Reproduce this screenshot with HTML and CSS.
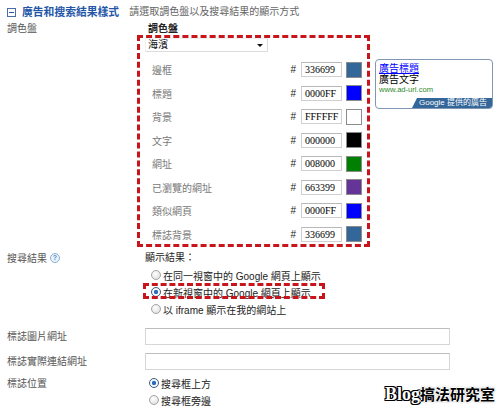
FILE: index.html
```html
<!DOCTYPE html>
<html>
<head>
<meta charset="utf-8">
<link rel="stylesheet" href="styles.css">
</head>
<body>
<div class="page">
  <div class="header">
    <span class="collapse-icon"></span>
    <span class="title">廣告和搜索結果樣式</span>
    <span class="desc">請選取調色盤以及搜尋結果的顯示方式</span>
  </div>

  <div class="row row-palette">
    <div class="label">調色盤</div>
    <div class="content">
      <div class="subtitle">調色盤</div>
      <div class="palette-wrap">
        <div class="palette-box">
          <div class="select"><span>海濱</span><span class="caret"></span></div>
          <div class="color-list">
            <div class="color-row"><span class="cname">邊框</span><span class="hash">#</span><span class="hex">336699</span><span class="swatch" style="background:#336699"></span></div>
            <div class="color-row"><span class="cname">標題</span><span class="hash">#</span><span class="hex">0000FF</span><span class="swatch" style="background:#0000FF"></span></div>
            <div class="color-row"><span class="cname">背景</span><span class="hash">#</span><span class="hex">FFFFFF</span><span class="swatch" style="background:#FFFFFF"></span></div>
            <div class="color-row"><span class="cname">文字</span><span class="hash">#</span><span class="hex">000000</span><span class="swatch" style="background:#000000"></span></div>
            <div class="color-row"><span class="cname">網址</span><span class="hash">#</span><span class="hex">008000</span><span class="swatch" style="background:#008000"></span></div>
            <div class="color-row"><span class="cname">已瀏覽的網址</span><span class="hash">#</span><span class="hex">663399</span><span class="swatch" style="background:#663399"></span></div>
            <div class="color-row"><span class="cname">類似網頁</span><span class="hash">#</span><span class="hex">0000FF</span><span class="swatch" style="background:#0000FF"></span></div>
            <div class="color-row"><span class="cname">標誌背景</span><span class="hash">#</span><span class="hex">336699</span><span class="swatch" style="background:#336699"></span></div>
          </div>
        </div>
        <div class="preview">
          <div class="ad-title">廣告標題</div>
          <div class="ad-text">廣告文字</div>
          <div class="ad-url">www.ad-url.com</div>
          <div class="ad-footer">Google 提供的廣告</div>
        </div>
      </div>
    </div>
  </div>

  <div class="row row-results">
    <div class="label">搜尋結果 <span class="help">?</span></div>
    <div class="content">
      <div class="results-title">顯示結果：</div>
      <div class="option first"><span class="radio"></span><span class="opt-text">在同一視窗中的 Google 網頁上顯示</span></div>
      <div class="option marked"><span class="radio checked"></span><span class="opt-text">在新視窗中的 Google 網頁上顯示</span></div>
      <div class="option"><span class="radio"></span><span class="opt-text">以 iframe 顯示在我的網站上</span></div>
    </div>
  </div>

  <div class="row row-input first-input">
    <div class="label">標誌圖片網址</div>
    <div class="content"><div class="text-input"></div></div>
  </div>
  <div class="row row-input second-input">
    <div class="label">標誌實際連結網址</div>
    <div class="content"><div class="text-input"></div></div>
  </div>

  <div class="row row-position">
    <div class="label">標誌位置</div>
    <div class="content">
      <div class="option low"><span class="radio checked"></span><span class="opt-text">搜尋框上方</span></div>
      <div class="option low"><span class="radio"></span><span class="opt-text">搜尋框旁邊</span></div>
    </div>
  </div>

  <div class="watermark">Blog<span class="wm-cjk">搞法研究室</span></div>
</div>
</body>
</html>
```
FILE: styles.css
```css
html, body {
  margin: 0;
  padding: 0;
  background: #fff;
}
.page {
  position: relative;
  width: 500px;
  height: 412px;
  overflow: hidden;
  font-family: "Liberation Sans", "Noto Sans CJK TC", sans-serif;
  font-size: 10px;
  color: #333;
}
.header {
  display: flex;
  align-items: center;
  height: 14px;
  padding: 5px 0 3px 7px;
  line-height: 14px;
}
.collapse-icon {
  position: relative;
  width: 9px;
  height: 9px;
  box-sizing: border-box;
  border: 1px solid #4a6fa5;
  background: #fff;
}
.collapse-icon::after {
  content: "";
  position: absolute;
  left: 1px;
  right: 1px;
  top: 3px;
  height: 1px;
  background: #2b55a0;
}
.title {
  margin-left: 6px;
  font-size: 10.8px;
  font-weight: bold;
  color: #2456a8;
}
.desc {
  margin-left: 10px;
  color: #666;
}
.row {
  display: flex;
}
.label {
  width: 138px;
  padding-left: 7px;
  flex: none;
  color: #555;
}
.content {
  flex: 1;
}
.row-palette .label,
.subtitle {
  line-height: 13px;
}
.subtitle {
  padding-left: 3px;
  font-weight: bold;
  color: #222;
}
.palette-wrap {
  display: flex;
  align-items: flex-start;
}
.palette-box {
  width: 222px;
  margin-left: -8px;
  padding: 0 0 2px 5px;
  border: 3px dashed #c8151b;
}
.select {
  display: flex;
  align-items: center;
  justify-content: space-between;
  width: 123px;
  height: 14px;
  box-sizing: border-box;
  padding: 0 4px 0 2px;
  border: 1px solid #dcdcdc;
  border-top-color: #f0f0f0;
  border-left-color: #f0f0f0;
  color: #111;
  line-height: 12px;
}
.caret {
  width: 0;
  height: 0;
  border-left: 3px solid transparent;
  border-right: 3px solid transparent;
  border-top: 3px solid #111;
}
.color-list {
  display: flex;
  flex-direction: column;
  gap: 8.57px;
  margin-top: 10px;
}
.color-row {
  display: flex;
  align-items: center;
  height: 15px;
  padding-right: 5px;
}
.cname {
  flex: 1;
  padding-left: 7px;
  color: #777;
}
.hash {
  margin-right: 5px;
  color: #222;
  font-size: 10px;
}
.hex {
  width: 41px;
  height: 15px;
  box-sizing: border-box;
  padding-left: 3px;
  border: 1px solid #d0d0d0;
  border-top-color: #b8b8b8;
  font-family: "Liberation Serif", serif;
  font-size: 10px;
  line-height: 13px;
  color: #000;
  white-space: nowrap;
  overflow: hidden;
}
.swatch {
  width: 16px;
  height: 16px;
  margin-left: 4px;
  box-sizing: border-box;
  border: 1px solid #8c8c8c;
}
.preview {
  position: relative;
  width: 118px;
  height: 50px;
  margin: 24px 0 0 5px;
  box-sizing: border-box;
  padding: 3px 0 0 3px;
  border: 1px solid #8196b2;
  border-radius: 4px;
  overflow: hidden;
  background: #fff;
}
.ad-title {
  color: #0000ff;
  text-decoration: underline;
  line-height: 11px;
}
.ad-text {
  color: #000;
  line-height: 11px;
}
.ad-url {
  color: #2e8b2e;
  font-size: 7.6px;
  line-height: 9px;
}
.ad-footer {
  position: absolute;
  right: 0;
  bottom: 0;
  width: 80px;
  height: 10px;
  padding-left: 7px;
  box-sizing: border-box;
  background: #336699;
  clip-path: polygon(5px 0, 100% 0, 100% 100%, 0 100%);
  color: #fff;
  font-size: 8px;
  line-height: 10px;
  white-space: nowrap;
}
.row-results {
  margin-top: 3px;
}
.row-results .label {
  display: flex;
  align-items: center;
  height: 16px;
}
.help {
  display: inline-flex;
  align-items: center;
  justify-content: center;
  width: 10px;
  height: 10px;
  margin-left: 3px;
  box-sizing: border-box;
  border: 1px solid #8ab0d4;
  border-radius: 50%;
  background: #eaf3fb;
  color: #5b8fc4;
  font-size: 7px;
  font-weight: bold;
  line-height: 8px;
}
.results-title {
  height: 16px;
  line-height: 16px;
  color: #222;
}
.option {
  position: relative;
  display: flex;
  align-items: center;
  height: 17px;
  padding-left: 6px;
  color: #222;
}
.option.first {
  margin-top: 1px;
}
.option.marked::after {
  content: "";
  position: absolute;
  left: -2px;
  top: -1px;
  width: 176px;
  height: 10px;
  border: 3px dashed #c8151b;
}
.option.low {
  padding-left: 4px;
}
.radio {
  width: 10px;
  height: 10px;
  flex: none;
  box-sizing: border-box;
  border: 1px solid #a5a5a5;
  border-radius: 50%;
  background: radial-gradient(circle at 40% 35%, #ffffff 0, #e4e4e4 70%, #cfcfcf 100%);
}
.radio.checked {
  border-color: #3c5a7e;
  background: radial-gradient(circle, #2b6cc4 0, #2b6cc4 1.8px, #ffffff 2.6px, #dfe8f2 100%);
}
.opt-text {
  margin-left: 2px;
}
.row-input .label {
  line-height: 17px;
}
.first-input {
  margin-top: 10px;
}
.second-input {
  margin-top: 8px;
}
.text-input {
  width: 305px;
  height: 17px;
  box-sizing: border-box;
  border: 1px solid #d6d6d6;
  border-top-color: #bdbdbd;
}
.row-position {
  margin-top: 5px;
}
.row-position .label {
  line-height: 17px;
}
.watermark {
  position: absolute;
  right: 5px;
  top: 385px;
  font-family: "Liberation Serif", "Noto Sans CJK TC", serif;
  font-size: 18px;
  font-weight: bold;
  line-height: 19px;
  color: #fff;
  text-shadow: 1px 0 0 #000, -1px 0 0 #000, 0 1px 0 #000, 0 -1px 0 #000, 1px 1px 0 #000, -1px -1px 0 #000, 1px -1px 0 #000, -1px 1px 0 #000;
}
.wm-cjk {
  font-size: 15px;
  color: #000;
  text-shadow: 1px 0 0 #fff, -1px 0 0 #fff, 0 1px 0 #fff, 0 -1px 0 #fff, 0 0 2px #000;
}
```
